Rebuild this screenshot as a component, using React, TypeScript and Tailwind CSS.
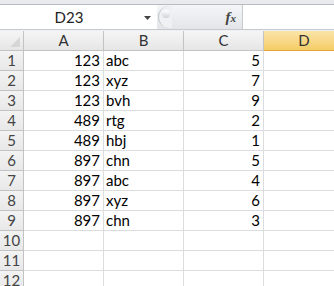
const rows: [string, string, string][] = [
  ["123", "abc", "5"],
  ["123", "xyz", "7"],
  ["123", "bvh", "9"],
  ["489", "rtg", "2"],
  ["489", "hbj", "1"],
  ["897", "chn", "5"],
  ["897", "abc", "4"],
  ["897", "xyz", "6"],
  ["897", "chn", "3"],
  ["", "", ""],
  ["", "", ""],
  ["", "", ""],
];

const cols = ["A", "B", "C"];

export default function App() {
  return (
    <div className="h-[286px] w-[334px] overflow-hidden bg-white font-['Lato','Open_Sans',sans-serif] text-[15px] text-black">
      {/* ribbon edge */}
      <div className="h-[5px] border-b border-[#b8bcc2] bg-[#e8eaed]" />

      {/* formula bar */}
      <div className="flex h-[25px] border-b border-[#c6c9ce]">
        <div className="relative flex w-[157px] items-center bg-white">
          <span className="w-[138px] text-center leading-none text-[#222]">D23</span>
          <svg width="7" height="4" viewBox="0 0 7 4" className="absolute left-[144px] top-[11px]">
            <path d="M0 0h7L3.5 4z" fill="#444" />
          </svg>
        </div>
        <div className="flex w-[86px] items-center border-r border-[#c6c9ce] bg-gradient-to-b from-[#f4f5f7] to-[#e3e5e9]">
          <div className="ml-[1px] flex h-[22px] w-[14px] items-start justify-center rounded-l-full border-l border-[#c4c8cd] bg-[#eef0f2] pt-[4px]">
            <div className="h-[8px] w-[8px] rounded-full bg-gradient-to-b from-[#ffffff] to-[#cfd3d8]" />
          </div>
          <span className="ml-auto mr-[6px] font-['Liberation_Serif',serif] text-[15px] italic font-bold leading-none text-[#444]">
            f<span className="text-[11px]">x</span>
          </span>
        </div>
        <div className="flex-1 bg-white" />
      </div>
      <div className="h-[1px] bg-[#eef0f2]" />

      {/* column headers */}
      <div className="flex h-[20px] text-[#333]">
        <div className="relative w-[24px] shrink-0 border-r border-b border-[#c3c3c3] bg-gradient-to-b from-[#f5f5f5] to-[#e6e6e6]">
          <svg width="10" height="10" viewBox="0 0 10 10" className="absolute bottom-[3px] right-[3px]">
            <path d="M10 0V10H0z" fill="#d6d6d6" />
          </svg>
        </div>
        {cols.map((c) => (
          <div
            key={c}
            className="flex w-[80px] shrink-0 items-center justify-center border-r border-b border-[#c3c3c3] bg-gradient-to-b from-[#f5f5f5] to-[#e6e6e6] leading-none"
          >
            {c}
          </div>
        ))}
        <div className="flex w-[80px] shrink-0 items-center justify-center border-b border-[#e2a83d] bg-gradient-to-b from-[#fbe4a8] to-[#f5cd65] leading-none">
          D
        </div>
      </div>

      {/* cells */}
      {rows.map((r, i) => (
        <div key={i} className="flex h-[20px]">
          <div className="flex w-[24px] shrink-0 items-center justify-center border-r border-b border-[#c3c3c3] bg-gradient-to-b from-[#f3f3f3] to-[#e8e8e8] leading-none text-[#444]">
            {i + 1}
          </div>
          <div className="flex w-[80px] shrink-0 items-center justify-end border-r border-b border-[#dadcdd] pr-[3px] leading-none">
            {r[0]}
          </div>
          <div className="flex w-[80px] shrink-0 items-center border-r border-b border-[#dadcdd] pl-[2px] leading-none">
            {r[1]}
          </div>
          <div className="flex w-[80px] shrink-0 items-center justify-end border-r border-b border-[#dadcdd] pr-[3px] leading-none">
            {r[2]}
          </div>
          <div className="w-[80px] shrink-0 border-b border-[#dadcdd]" />
        </div>
      ))}
    </div>
  );
}
